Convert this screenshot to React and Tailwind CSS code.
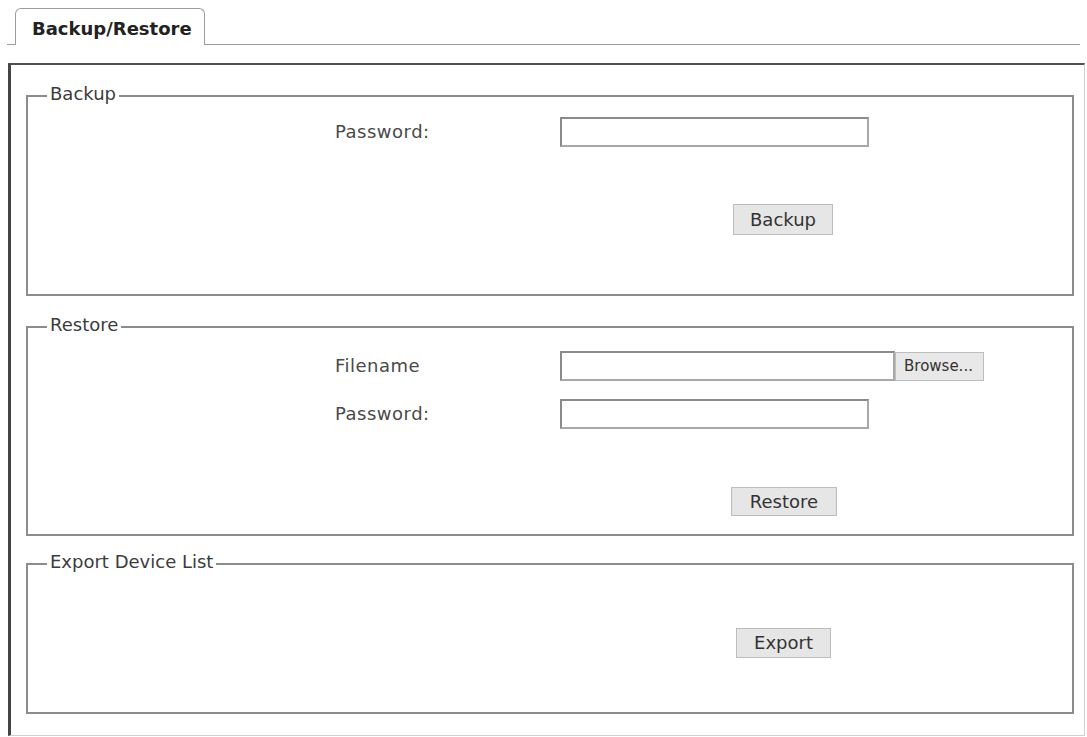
import React from 'react';

const font = { fontFamily: '"DejaVu Sans", Verdana, sans-serif' };

function Group({ title, className, children }) {
  return (
    <div className={`relative border-2 border-[#8c8c8c] ${className}`}>
      <span className="absolute -top-[13px] left-[19px] bg-white px-[3px] text-[18px] leading-[20px] text-[#3c3c3c]">
        {title}
      </span>
      {children}
    </div>
  );
}

function Field({ label, width, className = '', children }) {
  return (
    <div className={`flex items-center ${className}`}>
      <label className="ml-[307px] w-[225px] text-[18px] leading-[22px] tracking-[0.5px] text-[#4a4a4a]">{label}</label>
      <input
        type="text"
        className={`h-[30px] ${width} border-2 border-[#a8a8a8] border-t-[#8a8a8a] border-l-[#8a8a8a] bg-white outline-none`}
      />
      {children}
    </div>
  );
}

function Btn({ children, className = '' }) {
  return (
    <button
      type="button"
      className={`block border border-[#bdbdbd] bg-[#e6e6e6] text-[18px] leading-[22px] text-[#333] ${className}`}
    >
      {children}
    </button>
  );
}

export default function App() {
  return (
    <div className="h-[737px] w-[1087px] overflow-hidden bg-white" style={font}>
      {/* Tab strip */}
      <div className="flex px-[7px] pt-[8px]">
        <div className="w-[8px] border-b border-[#9d9d9d]" />
        <div className="h-[37px] w-[190px] rounded-t-[6px] border border-b-0 border-[#9d9d9d] bg-white pl-[16px] pt-[9px]">
          <span className="text-[18px] font-bold leading-[22px] text-[#222]">Backup/Restore</span>
        </div>
        <div className="flex-1 border-b border-[#9d9d9d]" />
      </div>

      {/* Panel */}
      <div className="ml-[8px] mt-[18px] h-[673px] w-[1077px] border-t-2 border-l-[3px] border-r border-b border-t-[#505050] border-l-[#454545] border-r-[#d0d0d0] border-b-[#d0d0d0] pl-[15px] pr-[10px] pt-[30px]">
        <Group title="Backup" className="h-[201px]">
          <Field label="Password:" width="w-[309px]" className="mt-[20px]" />
          <Btn className="ml-[705px] mt-[57px] h-[31px] w-[100px]">Backup</Btn>
        </Group>

        <Group title="Restore" className="mt-[30px] h-[210px]">
          <Field label="Filename" width="w-[335px] h-[29px]" className="mt-[23px]">
            <button
              type="button"
              className="h-[29px] w-[89px] border border-[#bdbdbd] bg-[#e8e8e8] pl-[8px] text-left text-[15px] leading-[20px] text-[#333]"
            >
              Browse...
            </button>
          </Field>
          <Field label="Password:" width="w-[309px]" className="mt-[18px]" />
          <Btn className="ml-[703px] mt-[58px] h-[29px] w-[106px]">Restore</Btn>
        </Group>

        <Group title="Export Device List" className="mt-[27px] h-[151px]">
          <Btn className="ml-[708px] mt-[63px] h-[30px] w-[95px]">Export</Btn>
        </Group>
      </div>
    </div>
  );
}
